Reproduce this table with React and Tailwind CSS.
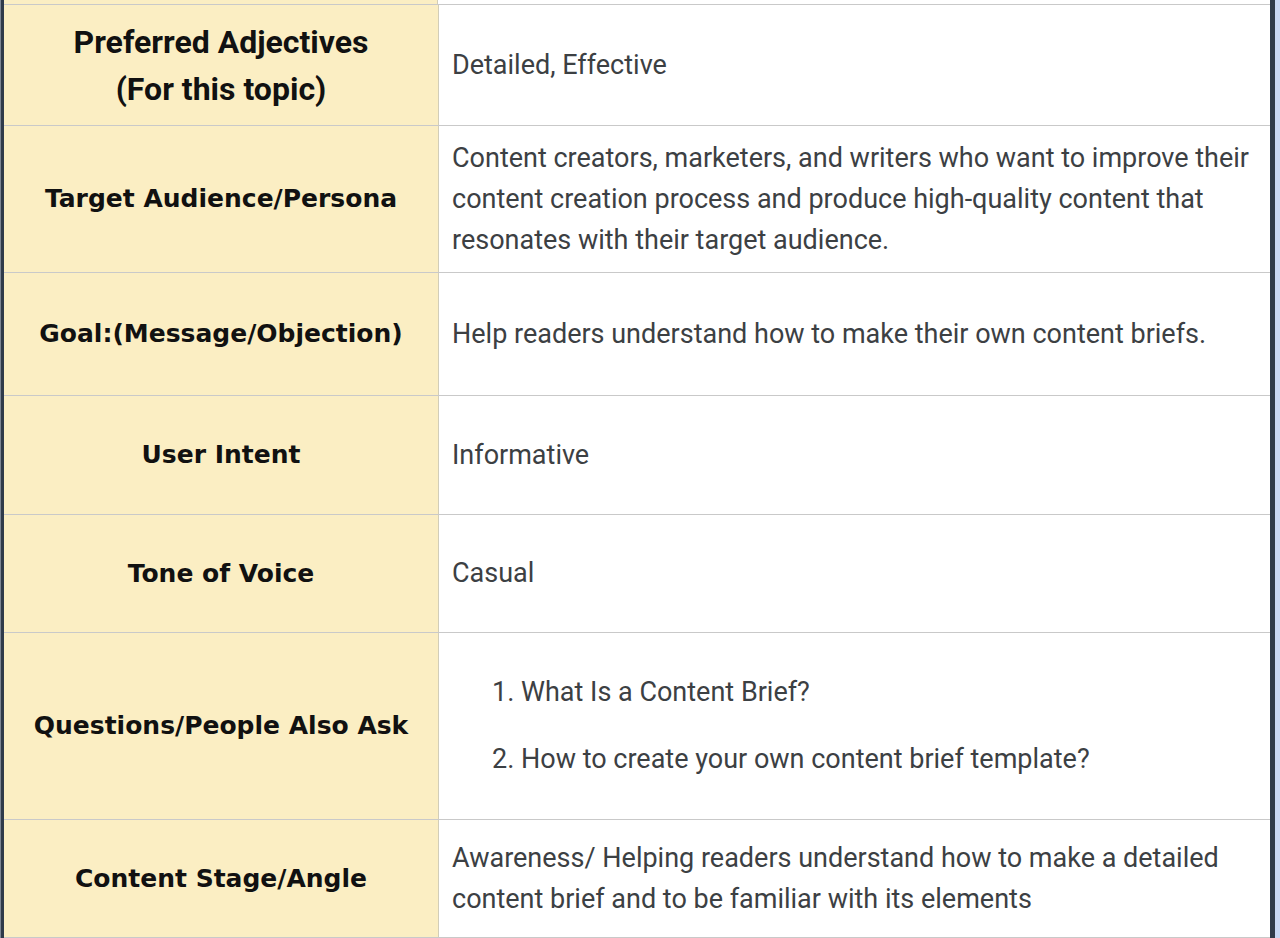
import React from "react";

const rows = [
  { h: "h-[121px]", label: null, content: "Detailed, Effective" },
  { h: "h-[147px]", label: "Target Audience/Persona", content: "Content creators, marketers, and writers who want to improve their content creation process and produce high-quality content that resonates with their target audience." },
  { h: "h-[123px]", label: "Goal:(Message/Objection)", content: "Help readers understand how to make their own content briefs." },
  { h: "h-[119px]", label: "User Intent", content: "Informative" },
  { h: "h-[118px]", label: "Tone of Voice", content: "Casual" },
  { h: "h-[187px]", label: "Questions/People Also Ask", list: ["What Is a Content Brief?", "How to create your own content brief template?"] },
  { h: "h-[118px]", label: "Content Stage/Angle", content: "Awareness/ Helping readers understand how to make a detailed content brief and to be familiar with its elements" },
];

const headFont = "font-['DejaVu_Sans',Verdana,sans-serif]";
const bodyFont = "font-['Roboto',sans-serif]";

export default function App() {
  return (
    <div className="flex w-[1280px] h-[938px] overflow-hidden bg-[#c8d7f4]">
      <div className="w-[1px] shrink-0 bg-[#7d8694]" />
      <div className="w-[3px] shrink-0 bg-[#2f3a4a]" />
      <div className="w-[1266px] shrink-0 flex flex-col">
        <div className="flex h-[4px] shrink-0">
          <div className="w-[434px] shrink-0 bg-[#fbeec3] border-r border-[#d2cdb8]" />
          <div className="flex-1 bg-white" />
        </div>
        {rows.map((r, i) => (
          <div key={i} className={`flex shrink-0 border-t border-[#c9c9c9] ${r.h}`}>
            <div className="w-[435px] shrink-0 bg-[#fbeec3] border-r border-[#d2cdb8] flex items-center justify-center text-center text-[#111111]">
              {r.label === null ? (
                <div className={`${bodyFont} font-bold text-[32px] leading-[47px] pt-[1px]`}>
                  Preferred Adjectives
                  <br />
                  (For this topic)
                </div>
              ) : (
                <div className={`${headFont} font-bold text-[25px] leading-[32px]`}>{r.label}</div>
              )}
            </div>
            <div className={`flex-1 bg-white flex items-center pl-[13px] pr-[8px] text-[#3c4043] ${bodyFont} text-[27px] leading-[41px]`}>
              {r.list ? (
                <ol className="list-decimal pl-[69px] flex flex-col gap-[26px]">
                  {r.list.map((q, j) => (
                    <li key={j}>{q}</li>
                  ))}
                </ol>
              ) : (
                <div>{r.content}</div>
              )}
            </div>
          </div>
        ))}
        <div className="h-[1px] shrink-0 bg-[#c9c9c9]" />
      </div>
      <div className="w-[5px] shrink-0 bg-[#2f3a4a]" />
    </div>
  );
}
